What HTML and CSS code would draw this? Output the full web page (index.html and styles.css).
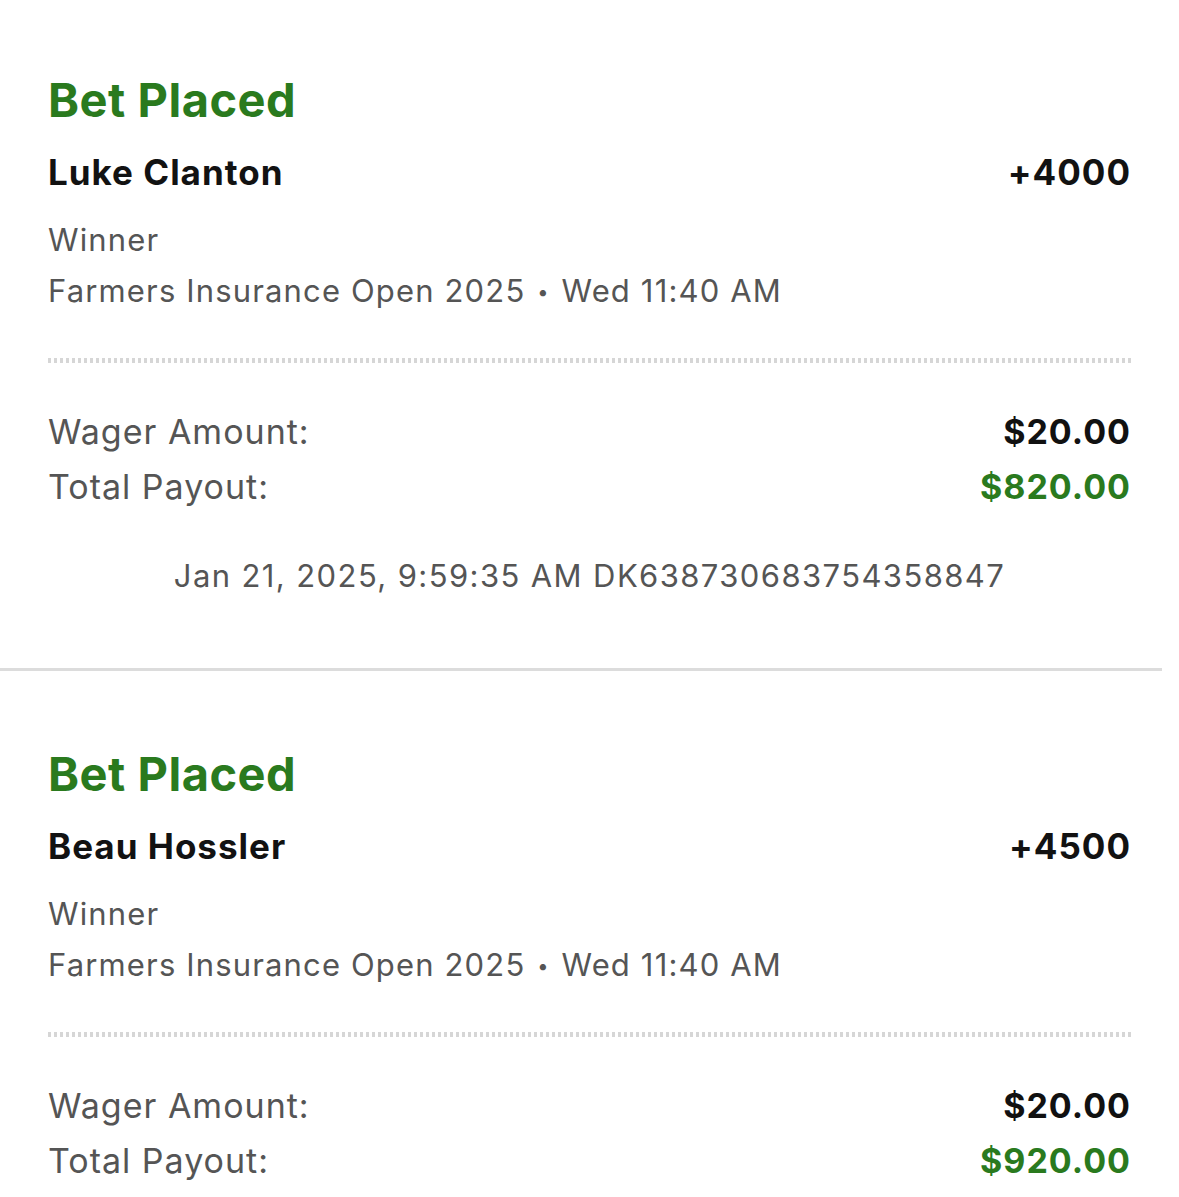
FILE: index.html
```html
<!DOCTYPE html>
<html lang="en">
<head>
<meta charset="utf-8">
<title>Bets</title>
<link rel="stylesheet" href="styles.css">
</head>
<body>
<div class="bet">
  <div class="status">Bet Placed</div>
  <div class="row selection"><span>Luke Clanton</span><span>+4000</span></div>
  <div class="market">Winner</div>
  <div class="event">Farmers Insurance Open 2025 <span class="sep">&bull;</span> Wed 11:40 AM</div>
  <div class="dots"></div>
  <div class="row amount"><span class="label">Wager Amount:</span><span class="value">$20.00</span></div>
  <div class="row amount"><span class="label">Total Payout:</span><span class="value payout">$820.00</span></div>
  <div class="meta">Jan 21, 2025, 9:59:35 AM DK638730683754358847</div>
</div>
<div class="divider"></div>
<div class="bet last">
  <div class="status">Bet Placed</div>
  <div class="row selection"><span>Beau Hossler</span><span>+4500</span></div>
  <div class="market">Winner</div>
  <div class="event">Farmers Insurance Open 2025 <span class="sep">&bull;</span> Wed 11:40 AM</div>
  <div class="dots"></div>
  <div class="row amount"><span class="label">Wager Amount:</span><span class="value">$20.00</span></div>
  <div class="row amount"><span class="label">Total Payout:</span><span class="value payout">$920.00</span></div>
</div>
</body>
</html>
```
FILE: styles.css
```css
html, body {
  margin: 0;
  padding: 0;
  background: #ffffff;
}
body {
  font-family: Inter, "Noto Sans", "Liberation Sans", sans-serif;
  color: #111111;
}
.bet {
  padding: 72px 48px 72px 48px;
}
.bet.last {
  padding-top: 75px;
  padding-bottom: 0;
}
.status {
  font-size: 47px;
  line-height: 56px;
  font-weight: 700;
  color: #2a7a1e;
  letter-spacing: 0.5px;
}
.row {
  display: flex;
  justify-content: space-between;
  align-items: baseline;
}
.selection {
  margin-top: 22px;
  font-size: 35px;
  line-height: 44px;
  font-weight: 700;
  color: #121212;
  letter-spacing: 1px;
}
.market, .event {
  font-size: 31px;
  line-height: 51px;
  color: #555555;
  letter-spacing: 1.15px;
}
.sep {
  font-size: 20px;
  vertical-align: 3px;
  padding: 0 2px;
}
.market {
  margin-top: 20px;
}
.dots {
  margin-top: 40px;
  height: 5px;
  background: repeating-linear-gradient(90deg, #d6d6d6 0 3px, transparent 3px 6px);
}
.dots + .amount {
  margin-top: 41px;
}
.amount {
  font-size: 34px;
  line-height: 55px;
  letter-spacing: 1px;
}
.label {
  color: #555555;
}
.value {
  font-weight: 700;
  color: #111111;
}
.value.payout {
  color: #2a7a1e;
}
.meta {
  margin-top: 42px;
  text-align: center;
  font-size: 31px;
  line-height: 40px;
  color: #555555;
  letter-spacing: 1.4px;
}
.divider {
  height: 3px;
  background: #dcdcdc;
  margin-right: 17px;
}
```
